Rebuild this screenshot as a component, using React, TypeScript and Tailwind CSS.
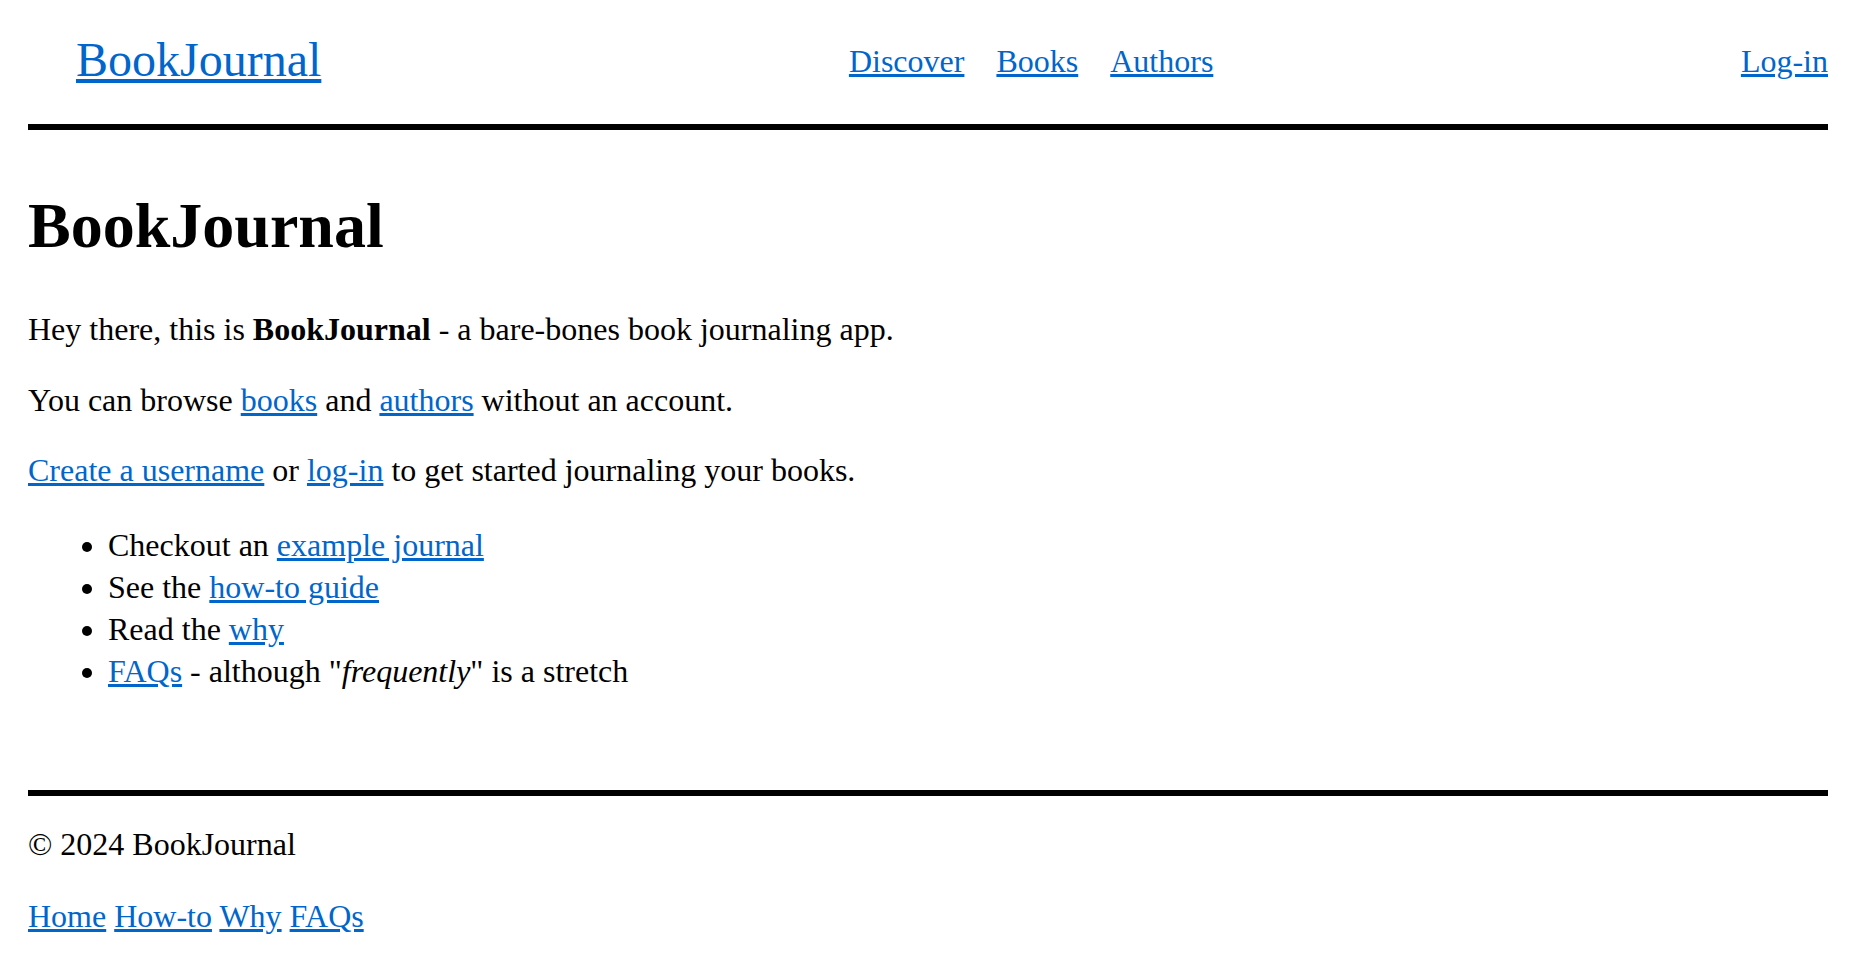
import React from "react";

const link = "text-[#0066cc] underline";

export default function App() {
  return (
    <div className="min-h-[962px] bg-white text-black pl-[28px] pr-[42px] font-['Liberation_Serif',serif] text-[32px] leading-[42px]">
      <header className="flex items-start justify-between pt-[32px] h-[130px] border-b-[6px] border-black">
        <a href="#" className={`mt-[1px] pl-[48px] text-[48px] leading-[53px] ${link}`}>
          BookJournal
        </a>
        <nav className="flex gap-[32px] mt-[11px] text-[32px] leading-[36px]">
          <a href="#" className={link}>Discover</a>
          <a href="#" className={link}>Books</a>
          <a href="#" className={link}>Authors</a>
        </nav>
        <a href="#" className={`mt-[11px] text-[32px] leading-[36px] ${link}`}>
          Log-in
        </a>
      </header>

      <main>
        <h1 className="mt-[59px] text-[64px] leading-[74px] font-bold">BookJournal</h1>
        <p className="mt-[45px]">
          Hey there, this is <strong className="font-bold">BookJournal</strong> - a bare-bones book journaling app.
        </p>
        <p className="mt-[29px]">
          You can browse <a href="#" className={link}>books</a> and{" "}
          <a href="#" className={link}>authors</a> without an account.
        </p>
        <p className="mt-[28px]">
          <a href="#" className={link}>Create a username</a> or{" "}
          <a href="#" className={link}>log-in</a> to get started journaling your books.
        </p>
        <ul className="mt-[33px] list-disc pl-[80px]">
          <li>
            Checkout an <a href="#" className={link}>example journal</a>
          </li>
          <li>
            See the <a href="#" className={link}>how-to guide</a>
          </li>
          <li>
            Read the <a href="#" className={link}>why</a>
          </li>
          <li>
            <a href="#" className={link}>FAQs</a> - although "<em className="italic">frequently</em>" is a stretch
          </li>
        </ul>
      </main>

      <footer className="mt-[98px] border-t-[6px] border-black pt-[27px]">
        <p>© 2024 BookJournal</p>
        <p className="mt-[30px]">
          <a href="#" className={link}>Home</a>{" "}
          <a href="#" className={link}>How-to</a>{" "}
          <a href="#" className={link}>Why</a>{" "}
          <a href="#" className={link}>FAQs</a>
        </p>
      </footer>
    </div>
  );
}
